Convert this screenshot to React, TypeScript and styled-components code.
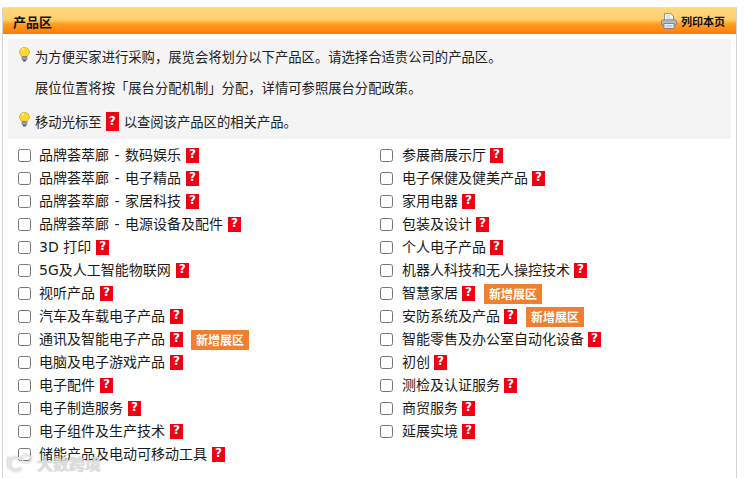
import styled, { createGlobalStyle } from "styled-components";

const leftZones = [
  { name: "品牌荟萃廊 - 数码娱乐" },
  { name: "品牌荟萃廊 - 电子精品" },
  { name: "品牌荟萃廊 - 家居科技" },
  { name: "品牌荟萃廊 - 电源设备及配件" },
  { name: "3D 打印" },
  { name: "5G及人工智能物联网" },
  { name: "视听产品" },
  { name: "汽车及车载电子产品" },
  { name: "通讯及智能电子产品", isNew: true },
  { name: "电脑及电子游戏产品" },
  { name: "电子配件" },
  { name: "电子制造服务" },
  { name: "电子组件及生产技术" },
  { name: "储能产品及电动可移动工具" },
];

const rightZones = [
  { name: "参展商展示厅" },
  { name: "电子保健及健美产品" },
  { name: "家用电器" },
  { name: "包装及设计" },
  { name: "个人电子产品" },
  { name: "机器人科技和无人操控技术" },
  { name: "智慧家居", isNew: true },
  { name: "安防系统及产品", isNew: true },
  { name: "智能零售及办公室自动化设备" },
  { name: "初创" },
  { name: "测检及认证服务" },
  { name: "商贸服务" },
  { name: "延展实境" },
];

const GlobalStyle = createGlobalStyle`
  html, body {
    margin: 0;
    padding: 0;
    background: #fff;
    overflow: hidden;
  }
  body {
    font-family: "DejaVu Sans", "Noto Sans CJK SC", sans-serif;
    color: #111;
  }
`;

const Page = styled.div`
  position: relative;
  width: 750px;
  height: 478px;
  overflow: hidden;
  padding: 7px 13px 0 2px;
  box-sizing: border-box;
`;

const Panel = styled.section`
  height: 471px;
  border: 1px solid #d4d4d4;
  border-bottom: 0;
  border-top-color: #e0e0e0;
  box-sizing: border-box;
`;

const Header = styled.header`
  height: 26px;
  display: flex;
  align-items: center;
  justify-content: space-between;
  padding: 0 11px 0 10px;
  background: linear-gradient(#ffd77c 0%, #ffcf6c 45%, #ff9d1f 62%, #ff7a0e 100%);
`;

const Title = styled.h1`
  margin: 0;
  font-size: 13px;
  font-weight: 700;
  font-family: "Noto Sans CJK SC", sans-serif;
  color: #111;
`;

const PrintLink = styled.a`
  display: flex;
  align-items: center;
  gap: 4px;
  font-size: 11px;
  font-weight: 700;
  font-family: "Noto Sans CJK SC", sans-serif;
  color: #111;
`;

const Notice = styled.div`
  margin: 5px 5px 0;
  height: 100px;
  background: #f4f4f4;
  box-sizing: border-box;
  padding-left: 11px;
  display: flex;
  flex-direction: column;
`;

const NoticeLine = styled.p<{ $height: number; $pushDown?: number }>`
  margin: 0;
  height: ${(p) => p.$height}px;
  padding-top: ${(p) => p.$pushDown ?? 0}px;
  box-sizing: border-box;
  display: flex;
  align-items: center;
  gap: 5px;
  font-size: 13.33px;
  font-family: "Noto Sans CJK SC", sans-serif;
  color: #222;
`;

const Indent = styled.span`
  margin-left: 16px;
`;

const BulbSlot = styled.span`
  display: flex;
  margin-bottom: 4px;
  flex: none;
`;

const Columns = styled.div`
  display: grid;
  grid-template-columns: 362px 1fr;
  padding: 5px 0 0 15px;
`;

const ZoneName = styled.span<{ $spaced?: boolean }>`
  margin-bottom: 4px;
  word-spacing: ${(p) => (p.$spaced ? "1px" : "0")};
`;

const Help = styled.span<{ $inline?: boolean }>`
  width: 13px;
  height: ${(p) => (p.$inline ? "19px" : "15px")};
  margin: ${(p) => (p.$inline ? "0 0 0 -1px" : "0 0 0 5px")};
  background: #f00010;
  color: #fff;
  font-size: 12px;
  font-weight: 700;
  font-family: "DejaVu Sans", sans-serif;
  display: inline-flex;
  justify-content: center;
  padding-top: ${(p) => (p.$inline ? "3px" : "0")};
  box-sizing: border-box;
  line-height: 13px;
  flex: none;
`;

const NewTag = styled.span`
  margin-left: 8px;
  width: 58px;
  height: 20px;
  background: #f08030;
  color: #fff;
  font-size: 12px;
  font-weight: 700;
  font-family: "Noto Sans CJK SC", sans-serif;
  display: inline-flex;
  align-items: center;
  justify-content: center;
  flex: none;
`;

const Column = styled.div<{ $right?: boolean }>`
  display: flex;
  flex-direction: column;
  ${ZoneName} {
    margin-left: ${(p) => (p.$right ? "1px" : "0")};
  }
  ${Help} {
    margin-left: ${(p) => (p.$right ? "4px" : "5px")};
  }
  ${NewTag} {
    margin-left: ${(p) => (p.$right ? "9px" : "8px")};
  }
`;

const Row = styled.label`
  height: 23px;
  display: flex;
  align-items: center;
  font-size: 14px;
  font-family: "DejaVu Sans", "Noto Sans CJK SC", sans-serif;
  color: #1a1a1a;
  white-space: nowrap;
`;

const Box = styled.span`
  width: 11px;
  height: 11px;
  border: 1px solid #767676;
  border-radius: 2.5px;
  background: #fff;
  margin-right: 8px;
  flex: none;
`;

const Watermark = styled.div`
  position: absolute;
  left: 7px;
  top: 451px;
  display: flex;
  align-items: center;
  gap: 4px;
  color: rgba(232, 232, 232, 0.8);
  font-size: 16px;
  line-height: 24px;
  font-weight: 700;
  font-family: "Noto Sans CJK SC", sans-serif;
  text-shadow: 0 0 1px rgba(100, 100, 100, 0.5);
  svg {
    filter: drop-shadow(0 0 1px rgba(100, 100, 100, 0.5));
  }
`;

const Bulb = () => (
  <svg width="11" height="15" viewBox="0 0 11 15">
    <path
      d="M5.5 .5C2.6 .5 .5 2.5 .5 4.9c0 2 1.5 3 2.1 4.6h5.8c.6-1.6 2.1-2.6 2.1-4.6C10.500 2.500 8.400 .5 5.500 .5z"
      fill="#ffd534"
      stroke="#d0a41c"
      strokeWidth=".7"
    />
    <path d="M3 3c.5-.8 1.200-1.100 2-1.100" stroke="#fff8c8" strokeWidth="1.200" fill="none" />
    <rect x="3" y="9.500" width="5" height="3.500" rx=".8" fill="#9aa0aa" stroke="#5a5f68" strokeWidth=".5" />
    <rect x="4" y="13" width="3" height="1.600" rx=".7" fill="#4f545c" />
  </svg>
);

const PrinterIcon = () => (
  <svg width="16" height="16" viewBox="0 0 16 16">
    <path d="M3.500 .6h6.300l2.700 2.600v4.300h-9z" fill="#fff" stroke="#737a84" strokeWidth=".8" />
    <path d="M5 3h4M5 5h5.500" stroke="#a8aeb8" strokeWidth=".7" />
    <rect x=".5" y="6.800" width="15" height="5.600" rx="1.700" fill="#b4bac2" stroke="#6f767f" strokeWidth=".8" />
    <rect x="3" y="10.600" width="10" height="4.900" fill="#f5f5f5" stroke="#6f767f" strokeWidth=".8" />
    <path d="M4.500 12.400h7M4.500 13.900h7" stroke="#9aa0a8" strokeWidth=".6" />
  </svg>
);

const WatermarkLogo = () => (
  <svg width="26" height="18" viewBox="0 0 26 18" fill="none" stroke="rgba(232,232,232,.9)" strokeWidth="2.200">
    <path d="M1.500 3v11" />
    <path d="M14 6A6.500 6.500 0 1 0 14 14" />
    <rect x="15" y="1" width="9" height="7" rx="3.500" strokeWidth="1.400" />
  </svg>
);

type Zone = { name: string; isNew?: boolean };

const ZoneRow = ({ zone }: { zone: Zone }) => (
  <Row>
    <Box />
    <ZoneName $spaced={zone.name.includes(" - ")}>{zone.name}</ZoneName>
    <Help>?</Help>
    {zone.isNew && <NewTag>新增展区</NewTag>}
  </Row>
);

export default function App() {
  return (
    <>
      <GlobalStyle />
      <Page>
        <Panel>
          <Header>
            <Title>产品区</Title>
            <PrintLink>
              <PrinterIcon />
              列印本页
            </PrintLink>
          </Header>
          <Notice>
            <NoticeLine $height={35}>
              <BulbSlot>
                <Bulb />
              </BulbSlot>
              为方便买家进行采购，展览会将划分以下产品区。请选择合适贵公司的产品区。
            </NoticeLine>
            <NoticeLine $height={27}>
              <Indent>展位位置将按「展台分配机制」分配，详情可参照展台分配政策。</Indent>
            </NoticeLine>
            <NoticeLine $height={38} $pushDown={3}>
              <BulbSlot>
                <Bulb />
              </BulbSlot>
              移动光标至
              <Help $inline>?</Help>
              以查阅该产品区的相关产品。
            </NoticeLine>
          </Notice>
          <Columns>
            <Column>
              {leftZones.map((zone) => (
                <ZoneRow key={zone.name} zone={zone} />
              ))}
            </Column>
            <Column $right>
              {rightZones.map((zone) => (
                <ZoneRow key={zone.name} zone={zone} />
              ))}
            </Column>
          </Columns>
        </Panel>
        <Watermark>
          <WatermarkLogo />
          大数跨境
        </Watermark>
      </Page>
    </>
  );
}
